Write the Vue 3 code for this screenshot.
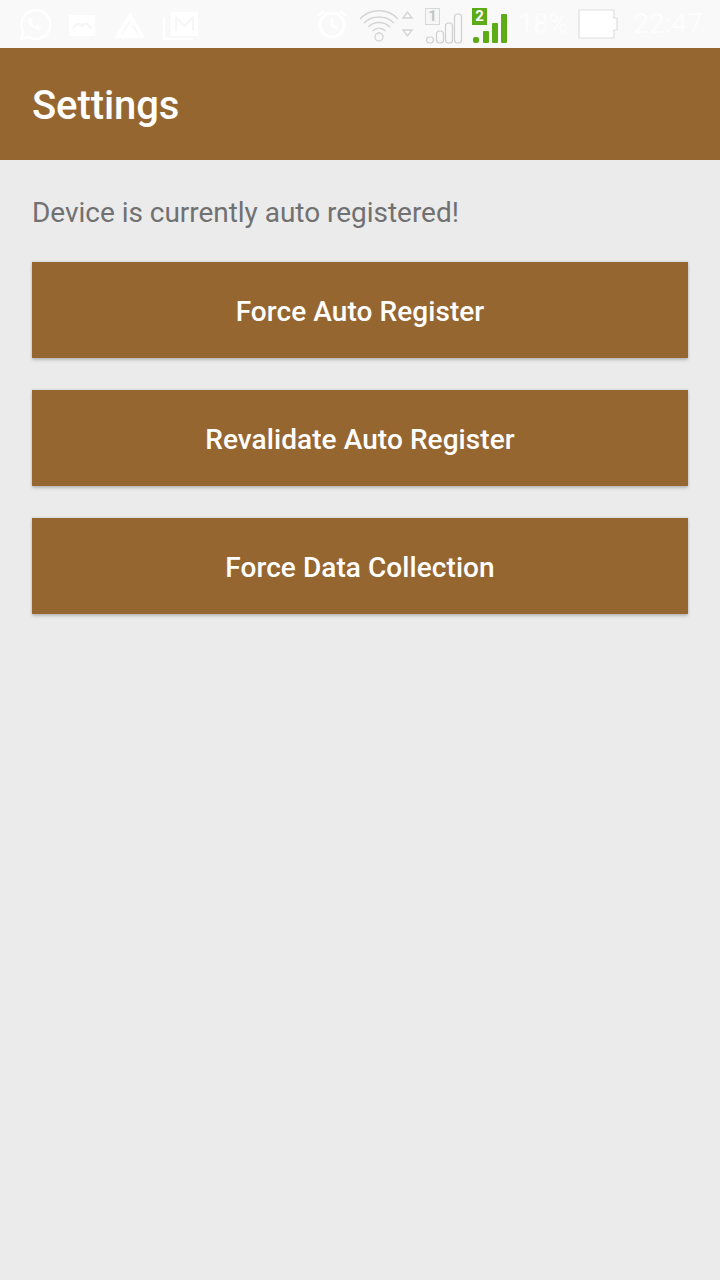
<script setup>
const buttons = ['Force Auto Register', 'Revalidate Auto Register', 'Force Data Collection']
</script>

<template>
  <div class="screen">
    <div class="status-bar">
      <div class="status-bar__left">
        <svg class="icon" width="34" height="34" viewBox="0 0 34 34">
          <path d="M3 31l2.2-7.6A14.4 14.4 0 1 1 10.6 29z" fill="none" stroke="#fff" stroke-width="2.4" />
          <path d="M11.5 9.5c-2 1.500-1.800 5 1.500 8.500s6.500 5 9 3.500l1-2.500-4-2-1.500 1.500c-1.500-.5-3.500-2.500-4-4l1.500-1.500-1.500-3.500z" fill="#fff" />
        </svg>
        <svg class="icon" width="28" height="24" viewBox="0 0 28 24">
          <rect x="1" y="2" width="26" height="21" fill="#fff" />
          <path d="M5 15l4-4h3l2 2 2-2h3l4 4" fill="none" stroke="#f6f6f6" stroke-width="2" />
        </svg>
        <svg class="icon icon--drive" width="34" height="30" viewBox="0 0 34 30">
          <path d="M17 1l15 27H2z" fill="#fff" />
          <path d="M17 11L9 24M20 15l5 9" stroke="#f8f8f8" stroke-width="2" />
        </svg>
        <svg class="icon icon--mail" width="36" height="30" viewBox="0 0 36 30">
          <path d="M8 2h27v24H8z" fill="#fff" />
          <path d="M1 7v22h29" fill="none" stroke="#fff" stroke-width="2" />
          <path d="M13 7v14M30 7v14M13 7l8.500 9L30 7" fill="none" stroke="#f6f6f6" stroke-width="2" />
        </svg>
      </div>

      <div class="status-bar__right">
        <svg class="icon icon--alarm" width="34" height="32" viewBox="0 0 34 32">
          <circle cx="17" cy="17" r="12" fill="none" stroke="#fff" stroke-width="3" />
          <path d="M17 10v7l5 3M3 8l6-5M31 8l-6-5" fill="none" stroke="#fff" stroke-width="2.500" />
        </svg>
        <svg class="icon icon--wifi" width="56" height="36" viewBox="0 0 56 36">
          <g fill="none" stroke="#d4d4d4" stroke-width="1.300">
            <path d="M2 13c10-11 28-11 38 0" />
            <path d="M6 17c8-8 22-8 30 0" />
            <path d="M10 21c6-6 16-6 22 0" />
            <path d="M14.500 25c4-3.500 9-3.500 13 0" />
            <circle cx="21" cy="31" r="4" />
            <path d="M45 12l4.500-6 4.500 6zM45 24l4.500 6 4.500-6z" />
          </g>
        </svg>
        <div class="sim">
          <span class="sim__badge">1</span>
          <svg width="38" height="36" viewBox="0 0 38 36">
            <g fill="none" stroke="#cfcfcf" stroke-width="1.200">
              <rect x="1.500" y="29" width="7" height="6" rx="3" />
              <rect x="11.500" y="23" width="7" height="12" rx="3" />
              <rect x="20.500" y="15" width="7" height="20" rx="3" />
              <rect x="29.500" y="6" width="7" height="29" rx="3" />
            </g>
          </svg>
        </div>
        <div class="sim sim--active">
          <span class="sim__badge sim__badge--active">2</span>
          <svg width="38" height="36" viewBox="0 0 38 36">
            <g fill="#5cab17">
              <rect x="1" y="29" width="6" height="6" rx="2" />
              <rect x="11" y="23" width="6" height="12" rx="1" />
              <rect x="20" y="15" width="6" height="20" rx="1" />
              <rect x="29" y="6" width="6" height="29" rx="1" />
            </g>
          </svg>
        </div>
        <span class="status-bar__percent">18%</span>
        <svg class="icon icon--battery" width="42" height="32" viewBox="0 0 42 32">
          <path d="M2 2h35v8h3v12h-3v8H2z" fill="#fff" stroke="#dedede" stroke-width="1.200" stroke-linejoin="round" />
        </svg>
        <span class="status-bar__time">22:47</span>
      </div>
    </div>

    <header class="toolbar">
      <h1 class="toolbar__title">Settings</h1>
    </header>

    <main class="content">
      <p class="content__message">Device is currently auto registered!</p>
      <button v-for="label in buttons" :key="label" class="action-button" type="button">
        {{ label }}
      </button>
    </main>
  </div>
</template>

<style scoped>
.screen {
  display: flex;
  flex-direction: column;
  width: 720px;
  height: 1280px;
  overflow: hidden;
  background-color: #ebebeb;
  font-family: Roboto, "Liberation Sans", sans-serif;
}

.status-bar {
  display: flex;
  flex-shrink: 0;
  justify-content: space-between;
  align-items: center;
  height: 48px;
  padding: 0 17px 0 18px;
  box-sizing: border-box;
  background-color: #f9f9f9;
}

.status-bar__left,
.status-bar__right {
  display: flex;
  align-items: center;
}

.status-bar__left {
  gap: 16px;
  margin-top: 2px;
}

.icon {
  display: block;
}

.icon--drive {
  margin-left: 1px;
}

.icon--alarm {
  margin-right: 9px;
}

.icon--wifi {
  margin-right: 11px;
}

.sim {
  display: flex;
  position: relative;
  width: 38px;
  height: 36px;
  margin-top: 4px;
  margin-right: 9px;
}

.sim--active {
  margin-right: 8px;
}

.sim__badge {
  position: absolute;
  top: 0;
  left: 0;
  width: 15px;
  height: 17px;
  box-sizing: border-box;
  border: 1px solid #d8d8d8;
  background-color: #f6f6f6;
  color: #c4c4c4;
  font-size: 15px;
  font-weight: 700;
  line-height: 15px;
  text-align: center;
}

.sim__badge--active {
  border-color: #5cab17;
  background-color: #5cab17;
  color: #fff;
}

.status-bar__percent,
.status-bar__time {
  color: #fdfdfd;
  font-size: 27px;
  line-height: 48px;
}

.status-bar__time {
  font-size: 28px;
}

.status-bar__percent {
  margin-right: 9px;
}

.icon--battery {
  margin-right: 14px;
}

.toolbar {
  display: flex;
  flex-shrink: 0;
  align-items: center;
  height: 112px;
  padding: 4px 32px 0;
  box-sizing: border-box;
  background-color: #966631;
}

.toolbar__title {
  margin: 0;
  color: #fff;
  font-size: 40px;
  font-weight: 500;
  line-height: 48px;
  letter-spacing: -0.1px;
}

.content {
  display: flex;
  flex: 1;
  flex-direction: column;
  padding: 32px;
}

.content__message {
  margin: 0 0 29px;
  color: #717171;
  font-size: 28px;
  line-height: 41px;
  letter-spacing: -0.03px;
}

.action-button {
  display: block;
  width: 100%;
  height: 96px;
  margin: 0 0 32px;
  padding: 2px 0 0;
  border: 0;
  border-radius: 0;
  background-color: #966631;
  box-shadow: 0 2px 3px rgba(0, 0, 0, 0.22), 0 -1px 2px rgba(0, 0, 0, 0.08);
  color: #fff;
  font-family: inherit;
  font-size: 28px;
  font-weight: 500;
  letter-spacing: 0.07px;
  text-align: center;
}
</style>
